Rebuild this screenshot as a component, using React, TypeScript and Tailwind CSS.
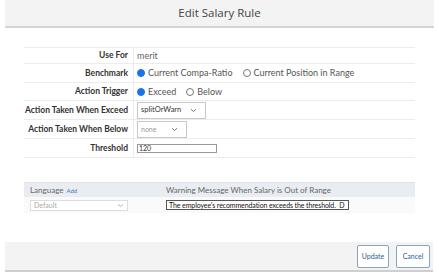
import React from "react";

const Chevron = ({ className = "" }: { className?: string }) => (
  <svg width="7" height="5" viewBox="0 0 7 5" className={className}>
    <path d="M1 1.2 L3.5 3.6 L6 1.2" fill="none" stroke="currentColor" strokeWidth="0.9" />
  </svg>
);

const Radio = ({ checked }: { checked?: boolean }) =>
  checked ? (
    <span className="inline-block w-[8px] h-[8px] rounded-full bg-[#1a73e8] border border-[#1a73e8] shrink-0" />
  ) : (
    <span className="inline-block w-[8px] h-[8px] rounded-full bg-white border border-[#777] shrink-0" />
  );

const Row = ({ label, h, children, last }: { label: string; h: string; children: React.ReactNode; last?: boolean }) => (
  <div className={`flex ${h} ${last ? "" : "border-b border-[#ececec]"}`}>
    <div className="w-[110px] shrink-0 flex items-center justify-end pr-[5px] font-bold text-[8.5px] text-[#333] border-r border-[#ececec] whitespace-nowrap">
      {label}
    </div>
    <div className="flex items-center pl-[3px] text-[#555] whitespace-nowrap">{children}</div>
  </div>
);

export default function App() {
  return (
    <div
      className="w-[439px] h-[279px] bg-white relative overflow-hidden"
      style={{ fontFamily: 'Lato, "Open Sans", sans-serif' }}
    >
      <div
        className="mx-[5px] h-[28px] bg-[#f3f3f3] border-b-2 border-[#d4d4d4] flex items-center justify-center text-[11.5px] text-[#444]"
        style={{ fontFamily: '"Open Sans", sans-serif' }}
      >
        Edit Salary Rule
      </div>

      <div className="mx-[24px] mt-[19px] border-t border-[#ececec] text-[9px]">
        <Row label="Use For" h="h-[16px]">
          <span className="text-[#666]">merit</span>
        </Row>
        <Row label="Benchmark" h="h-[19px]">
          <div className="flex items-center gap-[3px]">
            <Radio checked />
            <span>Current Compa-Ratio</span>
            <span className="ml-[4px]" />
            <Radio />
            <span>Current Position in Range</span>
          </div>
        </Row>
        <Row label="Action Trigger" h="h-[18px]">
          <div className="flex items-center gap-[3px]">
            <Radio checked />
            <span>Exceed</span>
            <span className="ml-[4px]" />
            <Radio />
            <span>Below</span>
          </div>
        </Row>
        <Row label="Action Taken When Exceed" h="h-[19px]">
          <div className="w-[69px] h-[17px] border border-[#c8c8c8] flex items-center justify-between pl-[3px] pr-[8px] text-[7.5px] text-[#333]">
            <span>splitOrWarn</span>
            <Chevron className="text-[#666]" />
          </div>
        </Row>
        <Row label="Action Taken When Below" h="h-[19px]">
          <div className="w-[50px] h-[17px] border border-[#c8c8c8] flex items-center justify-between pl-[3px] pr-[8px] text-[7px] text-[#999]">
            <span>none</span>
            <Chevron className="text-[#666]" />
          </div>
        </Row>
        <Row label="Threshold" h="h-[19px]">
          <div className="w-[80px] h-[9px] border border-[#999] flex items-center pl-[1px] text-[7px] text-[#333] leading-none">
            120
          </div>
        </Row>
      </div>

      <div className="mx-[24px] mt-[24px] text-[8px]">
        <div className="h-[15px] bg-[#e9edf2] border-t border-[#e0e4ea] flex items-center text-[#666]">
          <div className="w-[142px] pl-[6px] flex items-center gap-[3px]">
            <span>Language</span>
            <span className="text-[6px] text-[#3b78c4]">Add</span>
          </div>
          <span>Warning Message When Salary is Out of Range</span>
        </div>
        <div className="h-[16px] bg-[#fafafa] flex items-center">
          <div className="w-[142px] pl-[6px]">
            <div className="w-[98px] h-[11px] border border-[#ddd] bg-white flex items-center justify-between px-[3px] text-[#aaa] text-[7px]">
              <span>Default</span>
              <Chevron className="text-[#aaa]" />
            </div>
          </div>
          <div className="w-[183px] h-[10px] border border-[#555] bg-white flex items-center pl-[2px] text-[7px] text-[#111] whitespace-nowrap overflow-hidden leading-none tracking-[-0.1px]">
            The employee's recommendation exceeds the threshold.&nbsp; D
          </div>
        </div>
      </div>

      <div className="absolute left-[5px] right-[6px] top-[242px] h-[30px] bg-[#f3f3f3] border-b-2 border-[#cfcfcf] flex items-center justify-end gap-[7px] pr-[3px]">
        <div className="w-[32px] h-[23px] bg-white border border-[#8aa3c0] rounded-[2px] flex items-center justify-center text-[7px] text-[#2e5c94]">
          Update
        </div>
        <div className="w-[34px] h-[23px] bg-white border border-[#8aa3c0] rounded-[2px] flex items-center justify-center text-[7px] text-[#2e5c94]">
          Cancel
        </div>
      </div>
    </div>
  );
}
